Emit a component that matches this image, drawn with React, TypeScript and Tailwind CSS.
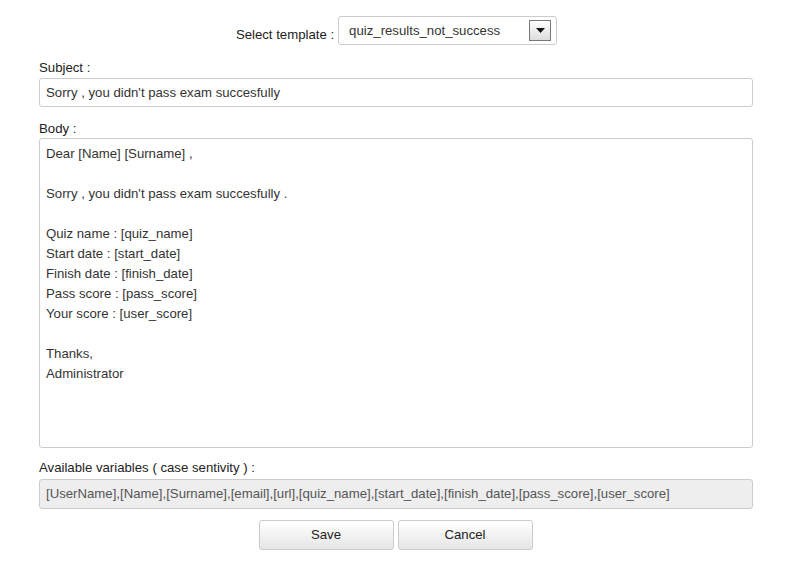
const bodyLines = [
  "Dear [Name] [Surname] ,",
  "",
  "Sorry , you didn't pass exam succesfully .",
  "",
  "Quiz name : [quiz_name]",
  "Start date : [start_date]",
  "Finish date : [finish_date]",
  "Pass score : [pass_score]",
  "Your score : [user_score]",
  "",
  "Thanks,",
  "Administrator",
];

export default function App() {
  return (
    <div className="w-[802px] h-[576px] bg-white text-[13.2px] text-[#333] font-['Liberation_Sans',Arial,sans-serif]">
      <div className="flex items-center justify-center pt-[16px] pr-[9px]">
        <span className="mr-[4px] mt-[8px] text-[#222]">Select template :</span>
        <div className="flex h-[29px] w-[219px] items-center justify-between rounded-[3px] border border-[#ccc] bg-white pl-[10px] pr-[5px]">
          <span className="text-[#333]">quiz_results_not_success</span>
          <div className="flex h-[21px] w-[22px] items-center justify-center border border-[#777] bg-gradient-to-b from-white to-[#ddd]">
            <svg width="9" height="5" viewBox="0 0 9 5">
              <path d="M0 0h9L4.5 5z" fill="#111" />
            </svg>
          </div>
        </div>
      </div>

      <div className="ml-[39px] w-[714px] pt-[14px]">
        <div className="h-[17px] leading-[17px] text-[#222]">Subject :</div>
        <div className="mt-[2px] flex h-[29px] items-center rounded-[3px] border border-[#ccc] px-[6px]">
          Sorry , you didn't pass exam succesfully
        </div>

        <div className="mt-[13px] h-[17px] leading-[17px] text-[#222]">Body :</div>
        <div className="mt-[1px] h-[310px] rounded-[3px] border border-[#ccc] px-[6px] pt-[5px] leading-[20px]">
          {bodyLines.map((l, i) => (
            <div key={i} className="h-[20px]">{l}</div>
          ))}
        </div>

        <div className="mt-[11px] h-[17px] leading-[17px] text-[#222]">Available variables ( case sentivity ) :</div>
        <div className="mt-[3px] flex h-[30px] items-center rounded-[3px] border border-[#ccc] bg-[#eee] px-[6px] text-[#555]">
          [UserName],[Name],[Surname],[email],[url],[quiz_name],[start_date],[finish_date],[pass_score],[user_score]
        </div>

        <div className="mt-[11px] flex justify-center gap-[4px] pr-[1px]">
          <button className="h-[30px] w-[135px] rounded-[3px] border border-[#ccc] bg-gradient-to-b from-white to-[#e6e6e6] text-[#222]">
            Save
          </button>
          <button className="h-[30px] w-[135px] rounded-[3px] border border-[#ccc] bg-gradient-to-b from-white to-[#e6e6e6] text-[#222]">
            Cancel
          </button>
        </div>
      </div>
    </div>
  );
}
